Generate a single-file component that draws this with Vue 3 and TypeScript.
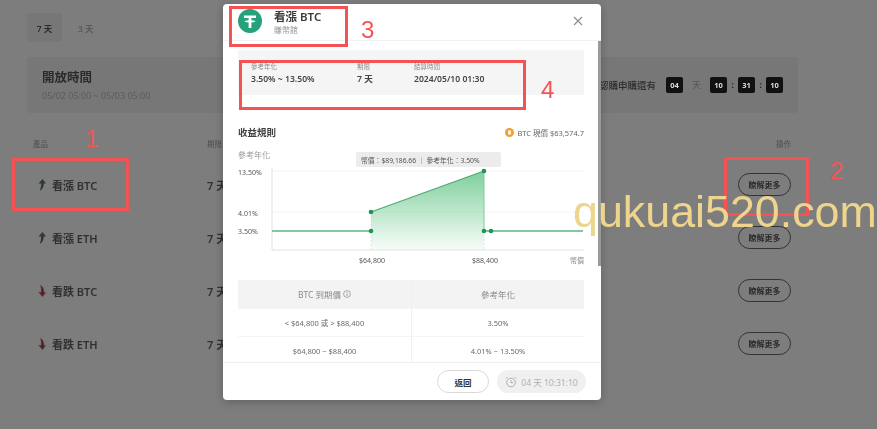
<script setup lang="ts">
interface Product { name: string; up: boolean }
const products: Product[] = [
  { name: '看漲 BTC', up: true },
  { name: '看漲 ETH', up: true },
  { name: '看跌 BTC', up: false },
  { name: '看跌 ETH', up: false },
]
const rules = [
  ['< $64,800 或 > $88,400', '3.50%'],
  ['$64,800 ~ $88,400', '4.01% ~ 13.50%'],
]
</script>

<template>
  <div class="screen">
    <main class="page">
      <nav class="tabs">
        <span class="tab active">7 天</span>
        <span class="tab">3 天</span>
      </nav>
      <section class="panel">
        <div>
          <h2>開放時間</h2>
          <p>05/02 05:00 ~ 05/03 05:00</p>
        </div>
        <div class="countdown">
          <span class="cd-label">認購申購還有</span>
          <b>04</b><i class="day">天</i><b>10</b><i>:</i><b>31</b><i>:</i><b>10</b>
        </div>
      </section>
      <div class="thead">
        <span>產品</span><span>期限</span><span class="op">操作</span>
      </div>
      <div v-for="p in products" :key="p.name" class="row">
        <span class="prod">
          <svg width="10" height="14" viewBox="0 0 10 14" :class="p.up ? 'arrow-up' : 'arrow-down'">
            <path v-if="p.up" d="M5.500 1 9 5.500H6.800C6.800 8.800 5.500 11.500 2.500 13 3.800 10.500 4.200 8 4 5.500H1.500Z" />
            <path v-else d="M3 1C6 2.500 7 4.500 7 8.200H9L5.500 13 1.500 8.200H4C4.300 5.500 4 3 3 1Z" />
          </svg>
          {{ p.name }}
        </span>
        <span class="term">7 天</span>
        <button class="more">瞭解更多</button>
      </div>
    </main>

    <div class="modal">
      <header class="m-head">
        <svg class="usdt" width="24" height="24" viewBox="0 0 24 24">
          <circle cx="12" cy="12" r="12" fill="#26a17b" />
          <path d="M6 6.500h12v2.600h-4.600v2.100c2.300.1 4.100.6 4.100 1.100s-1.800 1-4.100 1.100V19h-2.800v-5.600c-2.300-.1-4.100-.6-4.100-1.100s1.800-1 4.100-1.100V9.100H6Z" fill="#fff" />
        </svg>
        <div class="m-title">
          <strong>看漲 BTC</strong>
          <small>賺幣館</small>
        </div>
        <svg class="close" width="10" height="10" viewBox="0 0 10 10">
          <path d="M1 1 9 9M9 1 1 9" stroke="#8a8a8a" stroke-width="1.100" />
        </svg>
      </header>
      <div class="m-body">
        <div class="info">
          <div class="info-col c1"><label>參考年化</label><b>3.50% ~ 13.50%</b></div>
          <div class="info-col c2"><label>期限</label><b>7 天</b></div>
          <div class="info-col"><label>結算時間</label><b>2024/05/10 01:30</b></div>
        </div>
        <div class="rule-head">
          <h3>收益規則</h3>
          <span class="price">
            <svg width="9" height="9" viewBox="0 0 10 10">
              <circle cx="5" cy="5" r="5" fill="#f0a030" />
              <path d="M3.500 2.800h2.300c1.300 0 1.300 2 0 2.100 1.500.1 1.500 2.300 0 2.300H3.500Z" fill="#fff" />
            </svg>
            BTC 現價 $63,574.7
          </span>
        </div>
        <svg class="chart" width="346" height="123" viewBox="238 147 346 123">
          <defs>
            <linearGradient id="area" x1="0" y1="0" x2="0" y2="1">
              <stop offset="0" stop-color="#7fcf9c" />
              <stop offset="1" stop-color="#7fcf9c" stop-opacity=".05" />
            </linearGradient>
          </defs>
          <text x="238" y="158" class="t g" font-size="8">參考年化</text>
          <rect x="356" y="152" width="145" height="15" rx="2" fill="#ececec" />
          <text x="361" y="162.500" class="t" font-size="6.800" fill="#555">幣價：$89,186.66 ｜ 參考年化：3.50%</text>
          <path d="M272 171H584M272 212H584" stroke="#f3f3f3" stroke-width="1" />
          <path d="M272 168V250H584" stroke="#e2e2e2" fill="none" />
          <path d="M371 212V250M484 171V250" stroke="#e9e9e9" stroke-dasharray="2 2" />
          <polygon points="371,212 484,171 484,250 371,250" fill="url(#area)" />
          <path d="M371 212 484 171" stroke="#4da974" stroke-width="1.200" />
          <path d="M484 171V231" stroke="#7fcf9c" />
          <path d="M272 231H371M484 231H491M491 231H583" stroke="#57b97f" stroke-width="1.500" />
          <g fill="#1f9358">
            <circle cx="371" cy="212" r="2.300" /><circle cx="484" cy="171" r="2.300" />
            <circle cx="371" cy="231" r="2.300" /><circle cx="484" cy="231" r="2.300" />
            <circle cx="491" cy="231" r="2.300" />
          </g>
          <g class="t" font-size="7" fill="#555">
            <text x="238" y="175">13.50%</text>
            <text x="238" y="216">4.01%</text>
            <text x="238" y="234">3.50%</text>
            <text x="372" y="263" text-anchor="middle">$64,800</text>
            <text x="485" y="263" text-anchor="middle">$88,400</text>
            <text x="584" y="263" text-anchor="end" fill="#888">幣價</text>
          </g>
        </svg>
        <div class="rules">
          <div class="r-row r-head">
            <span>BTC 到期價
              <svg width="8" height="8" viewBox="0 0 8 8" class="inf">
                <circle cx="4" cy="4" r="3.400" fill="none" stroke="#888" stroke-width=".7" />
                <path d="M4 3.500V6M4 2V2.800" stroke="#888" stroke-width=".8" />
              </svg>
            </span>
            <span>參考年化</span>
          </div>
          <div v-for="r in rules" :key="r[0]" class="r-row">
            <span>{{ r[0] }}</span><span>{{ r[1] }}</span>
          </div>
        </div>
      </div>
      <i class="scroll"></i>
      <footer class="m-foot">
        <button class="back">返回</button>
        <button class="timer">
          <svg width="12" height="12" viewBox="0 0 12 12" fill="none" stroke="#a5a5a5" stroke-width=".9">
            <circle cx="6" cy="6.500" r="4.300" />
            <path d="M6 4.200V6.700H8M1 2.500 2.500 1M11 2.500 9.500 1" />
          </svg>
          04 天 10:31:10
        </button>
      </footer>
    </div>

    <div class="note n1"></div><span class="num d1">1</span>
    <div class="note n2"></div><span class="num d2">2</span>
    <div class="note n3"></div><span class="num d3">3</span>
    <div class="note n4"></div><span class="num d4">4</span>
    <span class="mark">qukuai520.com</span>
  </div>
</template>

<style>
html, body { margin: 0; background: #7d7d7d; }
</style>

<style scoped>
.screen {
  position: relative;
  width: 877px;
  height: 429px;
  overflow: hidden;
  background: #7d7d7d;
  font-family: "Noto Sans", "Noto Sans CJK TC", sans-serif;
  color: #2a2a2a;
}
.page { padding: 13px 79px 0 27px; filter: blur(.6px); }
.tabs { display: flex; align-items: center; gap: 16px; height: 29px; font-size: 8.500px; font-weight: 600; }
.tab { color: #5a5a5a; }
.tab.active { display: flex; align-items: center; justify-content: center; width: 35px; height: 29px; border-radius: 3px; background: #777; color: #2c2c2c; }
.panel {
  display: flex; justify-content: space-between; align-items: center;
  height: 56px; margin-top: 15px; padding: 0 15px; border-radius: 4px; background: #777; box-sizing: border-box;
}
.panel h2 { margin: 0; font-size: 12.500px; line-height: 16px; font-weight: 700; color: #2a2a2a; }
.panel p { margin: 5px 0 0; font-size: 9px; line-height: 9px; color: #5c5c5c; }
.countdown { display: flex; align-items: center; font-size: 9.500px; color: #2d2d2d; }
.cd-label { margin-right: 10px; font-weight: 500; }
.countdown b { display: flex; align-items: center; justify-content: center; width: 17px; height: 16px; border-radius: 2px; background: #111; color: #ddd; font-size: 7.500px; }
.countdown i { width: 11px; text-align: center; font-style: normal; font-weight: 700; line-height: 1; }
.countdown i.day { width: 27px; font-size: 8.500px; font-weight: 400; color: #555; }
.thead { display: grid; grid-template-columns: 174px 1fr auto; align-items: center; height: 29px; margin-top: 16px; padding: 0 7px 0 6px; font-size: 7.500px; color: #4d4d4d; }
.row { display: grid; grid-template-columns: 174px 1fr auto; align-items: center; height: 53px; padding: 0 7px 0 6px; font-size: 11px; font-weight: 600; color: #303030; }
.prod { display: flex; align-items: center; gap: 5px; padding-left: 4px; }
.arrow-up { fill: #2d3a33; }
.arrow-down { fill: #3a2c2e; stroke: #a5464e; stroke-width: .5; }
.more { width: 53px; height: 23px; padding: 0; border: 1px solid #333; border-radius: 12px; background: transparent; font: 600 8px "Noto Sans", "Noto Sans CJK TC", sans-serif; color: #2b2b2b; }

.modal {
  position: absolute; left: 223px; top: 4px; width: 378px; height: 396px;
  display: flex; flex-direction: column; box-sizing: border-box;
  border-radius: 4px; background: #fff; box-shadow: 0 2px 10px rgba(0,0,0,.22);
  filter: blur(.6px); overflow: hidden;
}
.m-head { display: flex; align-items: center; flex: none; height: 36px; padding: 0 18px 0 15px; border-bottom: 1px solid #f0f0f0; }
.usdt { flex: none; margin-top: -2px; }
.m-title { display: flex; flex-direction: column; margin-left: 12px; }
.m-title strong { font-size: 11.500px; line-height: 15px; font-weight: 600; color: #3a3a3a; }
.m-title small { font-size: 8px; line-height: 11px; color: #9a9a9a; }
.close { margin-left: auto; margin-top: -3px; }
.m-body { flex: 1; min-height: 0; overflow: hidden; padding: 9px 17px 0 15px; }
.info { display: flex; height: 45px; padding: 12px 13px 0; box-sizing: border-box; background: #f5f5f5; }
.info-col { display: flex; flex-direction: column; }
.c1 { width: 106px; }
.c2 { width: 57px; }
.info label { font-size: 6.500px; line-height: 9px; color: #8d8d8d; }
.info b { margin-top: 2px; font-size: 8.600px; line-height: 12px; font-weight: 600; color: #444; }
.rule-head { display: flex; justify-content: space-between; align-items: center; height: 16px; margin-top: 29px; }
.rule-head h3 { margin: 0; font-size: 9.500px; font-weight: 700; color: #3f3f3f; }
.price { display: flex; align-items: center; gap: 3px; font-size: 7.500px; color: #666; }
.chart { display: block; margin-top: 7px; }
.t { font-family: "Noto Sans", "Noto Sans CJK TC", sans-serif; }
.g { fill: #999; }
.rules { margin-top: 10px; font-size: 7.500px; color: #6a6a6a; }
.r-row { display: grid; grid-template-columns: 173px 1fr; height: 28px; border-bottom: 1px solid #f4f4f4; box-sizing: border-box; }
.r-row span { display: flex; align-items: center; justify-content: center; gap: 2px; }
.r-row span + span { border-left: 1px solid #f0f0f0; }
.r-head { height: 29px; background: #f3f3f3; font-size: 8.500px; color: #8b8b8b; }
.inf { flex: none; }
.scroll { position: absolute; right: 0; top: 37px; width: 3px; height: 225px; background: #9a9a9a; }
.m-foot { display: flex; justify-content: flex-end; align-items: center; gap: 8px; flex: none; height: 38px; padding-right: 15px; border-top: 1px solid #efefef; box-sizing: border-box; }
.m-foot button { height: 23px; border-radius: 12px; font-family: "Noto Sans", "Noto Sans CJK TC", sans-serif; font-size: 8.500px; }
.back { width: 52px; padding: 0; border: 1px solid #d8d8d8; background: #fff; color: #333; font-weight: 600; }
.timer { display: flex; align-items: center; justify-content: center; gap: 4px; width: 89px; padding: 0; border: 0; background: #f0f0f0; color: #b0b0b0; }

.note { position: absolute; box-sizing: border-box; border: 3px solid #f55353; }
.n1 { left: 12px; top: 158px; width: 117px; height: 53px; }
.n2 { left: 724px; top: 157px; width: 85px; height: 59px; }
.n3 { left: 229px; top: 6px; width: 119px; height: 41px; }
.n4 { left: 239px; top: 60px; width: 287px; height: 50px; }
.num { position: absolute; font-family: "Liberation Sans", sans-serif; font-size: 24px; line-height: 24px; color: #f55353; }
.d1 { left: 85px; top: 127px; }
.d2 { left: 830px; top: 159px; }
.d3 { left: 361px; top: 18px; }
.d4 { left: 541px; top: 78px; }
.mark { position: absolute; left: 573px; top: 185px; font-family: "Liberation Sans", sans-serif; font-size: 44.800px; line-height: 52px; color: #edd58d; white-space: nowrap; }
</style>
